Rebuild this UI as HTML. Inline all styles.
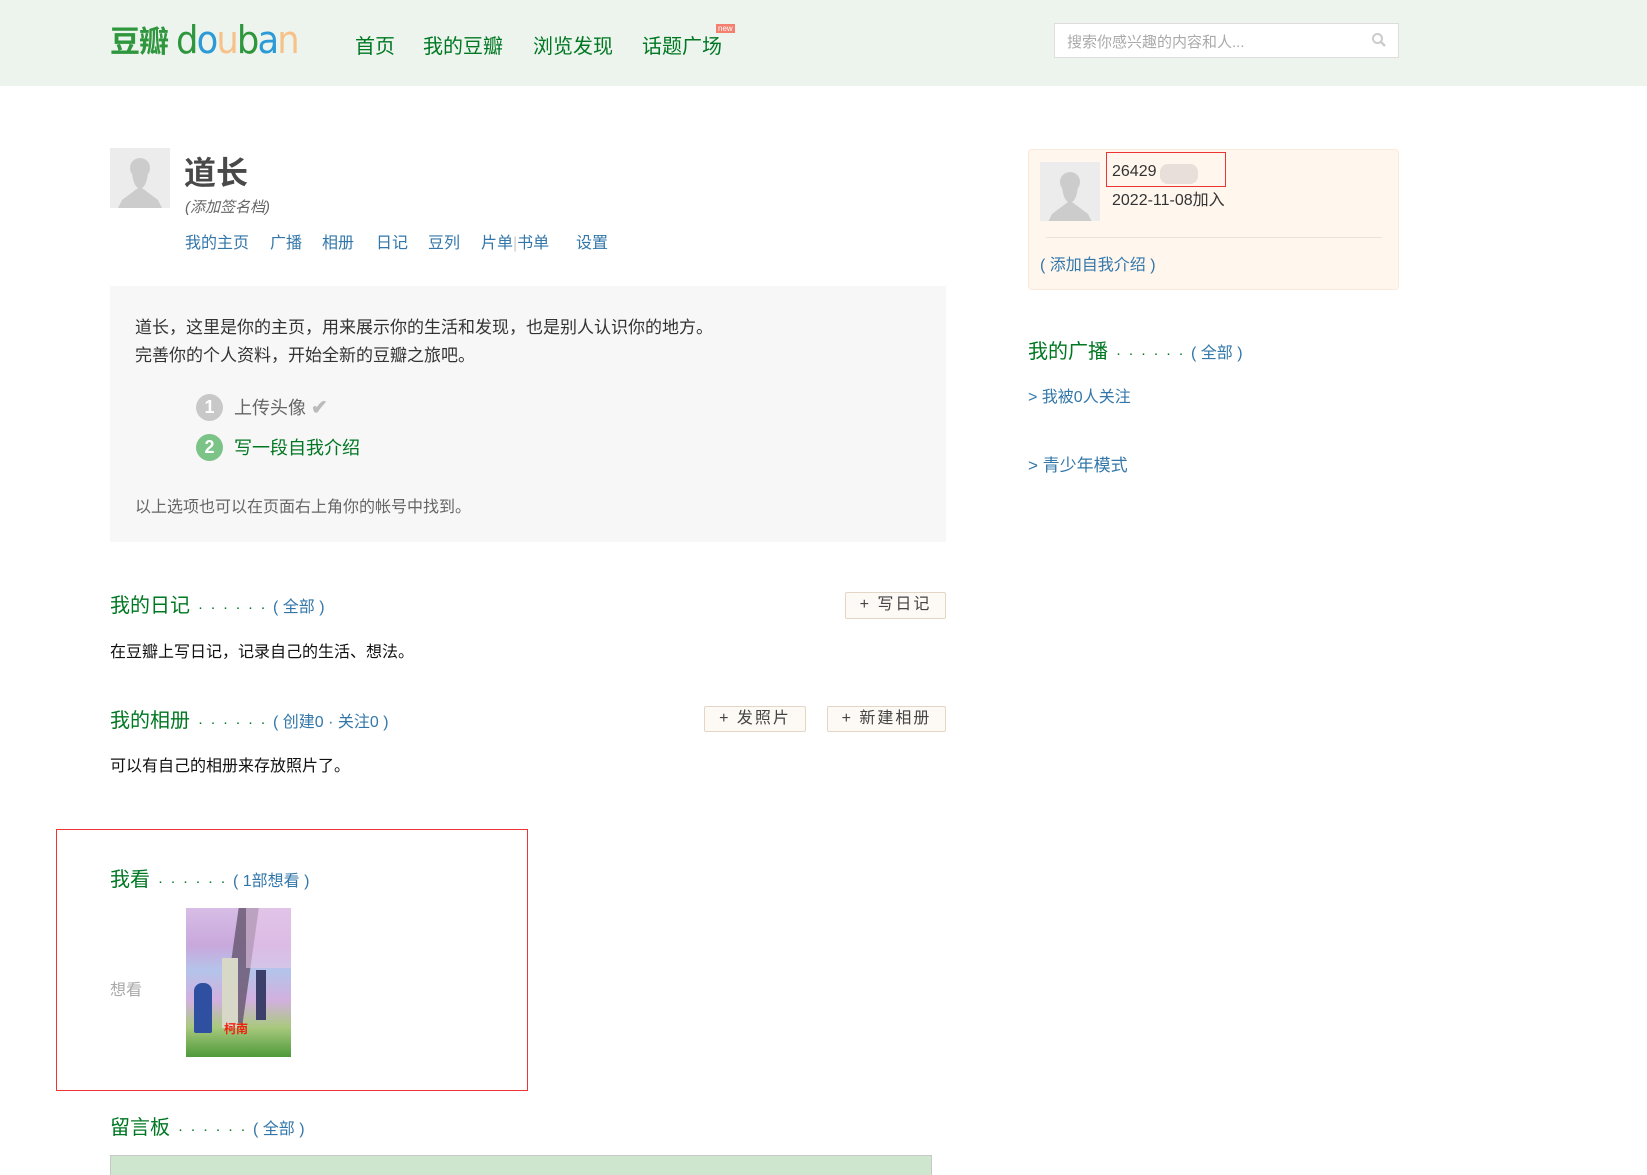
<!DOCTYPE html>
<html><head><meta charset="utf-8">
<style>
*{margin:0;padding:0;box-sizing:border-box}
body{width:1647px;height:1168px;position:relative;overflow:hidden;background:#fff;font-family:"Liberation Sans","Noto Sans CJK SC",sans-serif;color:#111}
.a{position:absolute;white-space:nowrap}
.hdr{left:0;top:0;width:1647px;height:86px;background:#edf4ed}
.nav{font-size:20px;color:#072;top:30px}
.blue{color:#37a}
.green{color:#072}
.h2{font-size:20px;color:#072}
.dots{color:#072;letter-spacing:7.5px;font-size:15px;margin-left:8px}
.par{font-size:16px;letter-spacing:1px}
.btn{border:1px solid #e3d6c6;background:#fdf9f5;border-radius:2px;font-size:16px;color:#444;text-align:center;letter-spacing:2px;line-height:24px}
.av{background:#ececec;overflow:hidden}
.tab{top:229px;font-size:16px;color:#37a}
</style></head><body>
<div class="a hdr"></div>
<div class="a" style="left:110px;top:17px;font-size:30px;font-weight:bold;color:#2e963d;letter-spacing:-1px">豆瓣</div>
<div class="a" style="left:176px;top:18px;font-size:38px;font-family:'DejaVu Sans',sans-serif;letter-spacing:-2px;transform:scaleX(.93);transform-origin:left"><span style="color:#2e963d">d</span><span style="color:#2b9ad6">o</span><span style="color:#f7c289">u</span><span style="color:#2e963d">b</span><span style="color:#2b9ad6">a</span><span style="color:#f7c289">n</span></div>
<div class="a nav" style="left:355px">首页</div>
<div class="a nav" style="left:423px">我的豆瓣</div>
<div class="a nav" style="left:533px">浏览发现</div>
<div class="a nav" style="left:642px">话题广场</div>
<div class="a" style="left:716px;top:24px;font-size:8px;background:#f47f6e;color:#fff;padding:0 2px;line-height:9px">new</div>
<div class="a" style="left:1054px;top:23px;width:345px;height:35px;background:#fff;border:1px solid #ddd;font-size:15px;color:#aaa;padding:7px 12px">搜索你感兴趣的内容和人...</div>
<svg class="a" style="left:1371px;top:32px" width="16" height="16" viewBox="0 0 16 16"><circle cx="6.5" cy="6.5" r="4.5" fill="none" stroke="#ccc" stroke-width="2"/><path d="M10 10l4 4" stroke="#ccc" stroke-width="2.5"/></svg>

<div class="a av" style="left:110px;top:148px;width:60px;height:60px"><svg width="60" height="60"><circle cx="30" cy="20" r="10" fill="#ccc"/><path d="M22 20 Q22 36 28 40 L12 52 L8 60 L52 60 L48 52 L32 40 Q38 36 38 20Z" fill="#ccc"/></svg></div>
<div class="a" style="left:184px;top:148px;font-size:32px;font-weight:bold;color:#494949">道长</div>
<div class="a" style="left:185px;top:196px;font-size:15px;color:#666;font-style:italic">(添加签名档)</div>
<div class="a tab" style="left:185px">我的主页</div>
<div class="a tab" style="left:270px">广播</div>
<div class="a tab" style="left:322px">相册</div>
<div class="a tab" style="left:376px">日记</div>
<div class="a tab" style="left:428px">豆列</div>
<div class="a tab" style="left:481px">片单<span style="color:#ccc">|</span>书单</div>
<div class="a tab" style="left:576px">设置</div>

<div class="a" style="left:110px;top:286px;width:836px;height:256px;background:#f7f7f7"></div>
<div class="a" style="left:135px;top:314px;font-size:17px;color:#333;line-height:28px">道长，这里是你的主页，用来展示你的生活和发现，也是别人认识你的地方。<br>完善你的个人资料，开始全新的豆瓣之旅吧。</div>
<div class="a" style="left:196px;top:394px;width:27px;height:27px;border-radius:50%;background:#c8c8c8;color:#fff;font-weight:bold;font-size:18px;text-align:center;line-height:27px">1</div>
<div class="a" style="left:234px;top:394px;font-size:18px;color:#666">上传头像 <span style="color:#bbb;font-weight:bold;font-size:20px">✔</span></div>
<div class="a" style="left:196px;top:434px;width:27px;height:27px;border-radius:50%;background:#7cc387;color:#fff;font-weight:bold;font-size:18px;text-align:center;line-height:27px">2</div>
<div class="a green" style="left:234px;top:434px;font-size:18px">写一段自我介绍</div>
<div class="a" style="left:135px;top:493px;font-size:16px;color:#666">以上选项也可以在页面右上角你的帐号中找到。</div>

<div class="a h2" style="left:110px;top:589px">我的日记<span class="dots">······</span><span class="blue" style="font-size:16px">( 全部 )</span></div>
<div class="a btn" style="left:845px;top:592px;width:101px;height:27px">+ 写日记</div>
<div class="a" style="left:110px;top:638px;font-size:16px">在豆瓣上写日记，记录自己的生活、想法。</div>

<div class="a h2" style="left:110px;top:704px">我的相册<span class="dots">······</span><span class="blue" style="font-size:16px">( 创建0 · 关注0 )</span></div>
<div class="a btn" style="left:704px;top:706px;width:102px;height:26px">+ 发照片</div>
<div class="a btn" style="left:827px;top:706px;width:119px;height:26px">+ 新建相册</div>
<div class="a" style="left:110px;top:752px;font-size:16px">可以有自己的相册来存放照片了。</div>

<div class="a" style="left:56px;top:829px;width:472px;height:262px;border:1px solid #e33"></div>
<div class="a h2" style="left:110px;top:863px">我看<span class="dots">······</span><span class="blue" style="font-size:16px">( 1部想看 )</span></div>
<div class="a" style="left:110px;top:976px;font-size:16px;color:#aaa">想看</div>
<div class="a" style="left:186px;top:908px;width:105px;height:149px;overflow:hidden;background:linear-gradient(180deg,#d7bde6 0%,#c9a8dc 25%,#b4c4ea 42%,#d2b0df 62%,#a9c97e 80%,#4e9a3a 100%)">
<div class="a" style="left:45px;top:-5px;width:20px;height:120px;background:#6b5a74;transform:rotate(8deg);opacity:.85"></div>
<div class="a" style="left:60px;top:0;width:45px;height:60px;background:#e7c8ea;opacity:.6"></div>
<div class="a" style="left:8px;top:75px;width:18px;height:50px;background:#2f4fa0;border-radius:8px 8px 2px 2px"></div>
<div class="a" style="left:36px;top:50px;width:16px;height:70px;background:#d8d8c8"></div>
<div class="a" style="left:70px;top:62px;width:10px;height:50px;background:#3b3f6a"></div>
<div class="a" style="left:38px;top:112px;font-size:12px;color:#e21;font-weight:bold">柯南</div>
</div>
<div class="a h2" style="left:110px;top:1111px">留言板<span class="dots">······</span><span class="blue" style="font-size:16px">( 全部 )</span></div>
<div class="a" style="left:110px;top:1155px;width:822px;height:20px;background:#cde6cd;border:1px solid #c8c8c8;border-bottom:none"></div>

<div class="a" style="left:1028px;top:149px;width:371px;height:141px;background:#fff6ee;border:1px solid #fbeadc;border-radius:4px"></div>
<div class="a av" style="left:1040px;top:162px;width:60px;height:59px"><svg width="60" height="60"><circle cx="30" cy="20" r="10" fill="#ccc"/><path d="M22 20 Q22 36 28 40 L12 52 L8 60 L52 60 L48 52 L32 40 Q38 36 38 20Z" fill="#ccc"/></svg></div>
<div class="a" style="left:1112px;top:163px;font-size:16px;color:#333">26429</div>
<div class="a" style="left:1160px;top:164px;width:38px;height:20px;background:#e2d8d4;border-radius:8px;opacity:.8"></div>
<div class="a" style="left:1106px;top:152px;width:120px;height:35px;border:1px solid #e33"></div>
<div class="a" style="left:1112px;top:186px;font-size:16px;color:#333">2022-11-08加入</div>
<div class="a" style="left:1046px;top:237px;width:336px;height:1px;background:#efe3d8"></div>
<div class="a blue" style="left:1040px;top:251px;font-size:16px">( 添加自我介绍 )</div>
<div class="a h2" style="left:1028px;top:335px">我的广播<span class="dots">······</span><span class="blue" style="font-size:16px">( 全部 )</span></div>
<div class="a blue" style="left:1028px;top:383px;font-size:16px">&gt; 我被0人关注</div>
<div class="a blue" style="left:1028px;top:451px;font-size:17px">&gt; 青少年模式</div>
</body></html>
